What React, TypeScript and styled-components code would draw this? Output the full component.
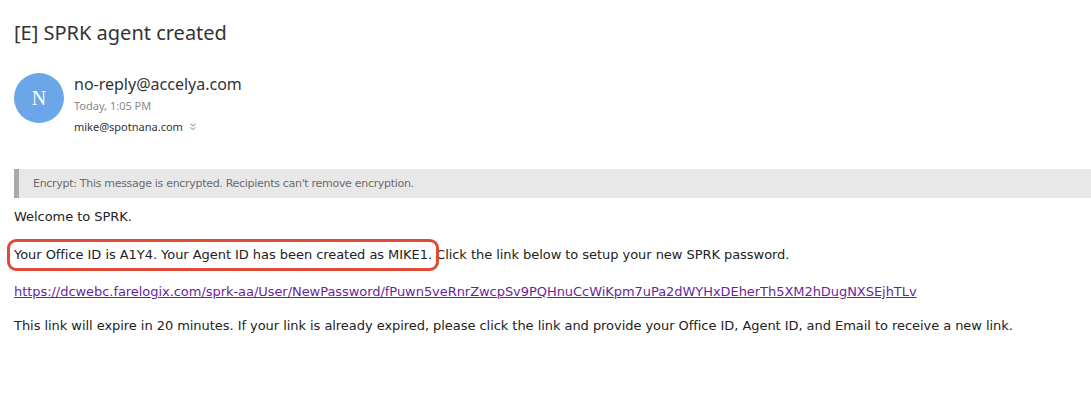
import React from 'react';
import styled, { createGlobalStyle } from 'styled-components';

const GlobalStyle = createGlobalStyle`
  body {
    margin: 0;
    background: #ffffff;
    font-family: "DejaVu Sans", Verdana, sans-serif;
  }
`;

const Page = styled.div`
  padding: 19px 0 0 14px;
`;

const Subject = styled.h1`
  margin: 0;
  font-family: "Noto Sans", "Open Sans", sans-serif;
  font-weight: 400;
  font-size: 20px;
  line-height: 28px;
  color: #333333;
`;

const Header = styled.div`
  display: flex;
  gap: 10px;
  margin-top: 25px;
`;

const Avatar = styled.div`
  width: 50px;
  height: 50px;
  border-radius: 50%;
  background: #6aa6e8;
  color: #ffffff;
  display: flex;
  align-items: center;
  justify-content: center;
  font-family: "Liberation Serif", serif;
  font-size: 20px;
  margin-top: 1px;
`;

const Meta = styled.div`
  display: flex;
  flex-direction: column;
  padding-top: 1px;
`;

const Sender = styled.div`
  font-family: "Noto Sans", "Open Sans", sans-serif;
  font-size: 16px;
  line-height: 22px;
  color: #333333;
`;

const Time = styled.div`
  font-family: "Noto Sans", sans-serif;
  font-size: 11px;
  line-height: 22px;
  color: #8a8a8a;
`;

const Recipient = styled.div`
  display: flex;
  align-items: center;
  gap: 6px;
  margin-top: -1px;
  font-family: "Noto Sans", sans-serif;
  font-size: 11px;
  line-height: 22px;
  color: #333333;
`;

const Chevron = styled.svg`
  width: 8px;
  height: 8px;
`;

const EncryptBar = styled.div`
  margin-top: 31px;
  height: 29px;
  display: flex;
  align-items: center;
  background: #e8e8e8;
  border-left: 5px solid #a9a9a9;
  padding-left: 14px;
  font-size: 11px;
  color: #6b6b6b;
  letter-spacing: -0.3px;
`;

const Body = styled.div`
  margin-top: 10px;
  display: flex;
  flex-direction: column;
  font-size: 13px;
  color: #222222;
  letter-spacing: -0.05px;
`;

const Para = styled.p<{ $top: number }>`
  margin: ${p => p.$top}px 0 0;
  line-height: 18px;
`;

const Highlight = styled.span`
  position: relative;

  &::after {
    content: '';
    position: absolute;
    left: -7px;
    right: -7px;
    top: -8px;
    bottom: -9px;
    border: 3px solid #e04b37;
    border-radius: 9px;
    pointer-events: none;
  }
`;

const Link = styled.a`
  color: #6b1f9e;
  text-decoration: underline;
`;

export default function App() {
  return (
    <Page>
      <GlobalStyle />
      <Subject>[E] SPRK agent created</Subject>
      <Header>
        <Avatar>N</Avatar>
        <Meta>
          <Sender>no-reply@accelya.com</Sender>
          <Time>Today, 1:05 PM</Time>
          <Recipient>
            mike@spotnana.com
            <Chevron viewBox="0 0 8 8" fill="none" stroke="#888" strokeWidth="1">
              <path d="M1.5 1 L4 3 L6.5 1" />
              <path d="M1.5 4.5 L4 6.5 L6.5 4.5" />
            </Chevron>
          </Recipient>
        </Meta>
      </Header>
      <EncryptBar>Encrypt: This message is encrypted. Recipients can't remove encryption.</EncryptBar>
      <Body>
        <Para $top={0}>Welcome to SPRK.</Para>
        <Para $top={20}>
          <Highlight>Your Office ID is A1Y4. Your Agent ID has been created as MIKE1.</Highlight> Click the link below to setup your new SPRK password.
        </Para>
        <Para $top={19}>
          <Link href="#">https://dcwebc.farelogix.com/sprk-aa/User/NewPassword/fPuwn5veRnrZwcpSv9PQHnuCcWiKpm7uPa2dWYHxDEherTh5XM2hDugNXSEjhTLv</Link>
        </Para>
        <Para $top={16}>
          This link will expire in 20 minutes. If your link is already expired, please click the link and provide your Office ID, Agent ID, and Email to receive a new link.
        </Para>
      </Body>
    </Page>
  );
}
